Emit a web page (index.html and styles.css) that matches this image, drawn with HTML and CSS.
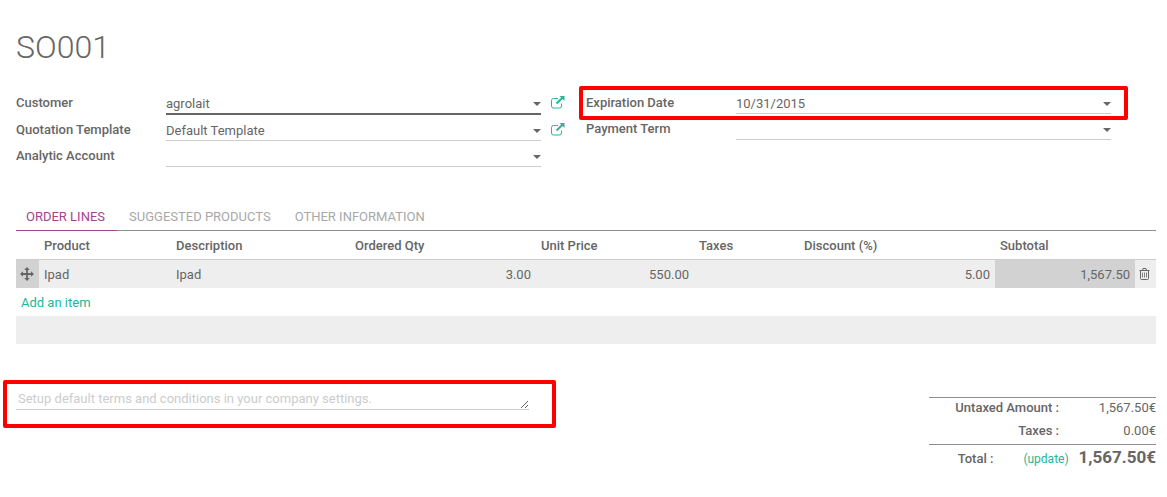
FILE: index.html
```
<!DOCTYPE html>
<html lang="en">

<head>
  <meta charset="UTF-8">
  <meta name="viewport" content="width=device-width, initial-scale=1.0">
  <title>SO001</title>
  <link rel="stylesheet" href="styles.css">
</head>

<body>
  <main class="sheet">
    <h1>SO001</h1>

    <div class="groups">
      <div class="group">
        <div class="field">
          <label for="customer">Customer</label>
          <div class="control dropdown">
            <input class="active" type="text" id="customer" value="agrolait">
          </div>
          <a class="external" href="#" aria-label="Open customer">
            <svg width="14" height="13" viewBox="0 0 14 13" fill="none" stroke="currentColor">
              <path d="M7 2.5H2.5Q.5 2.5 .5 4.5V10Q.5 12 2.5 12H8.5Q10.5 12 10.5 10V7.5" />
              <path d="M5.5 7.5L11.5 1.8" stroke-width="1.9" />
              <path d="M8.5 0H13.5V5Z" fill="currentColor" stroke="none" />
            </svg>
          </a>
        </div>
        <div class="field">
          <label for="template">Quotation Template</label>
          <div class="control dropdown">
            <select id="template">
              <option>Default Template</option>
            </select>
          </div>
          <a class="external" href="#" aria-label="Open quotation template">
            <svg width="14" height="13" viewBox="0 0 14 13" fill="none" stroke="currentColor">
              <path d="M7 2.5H2.5Q.5 2.5 .5 4.5V10Q.5 12 2.5 12H8.5Q10.5 12 10.5 10V7.5" />
              <path d="M5.5 7.5L11.5 1.8" stroke-width="1.9" />
              <path d="M8.5 0H13.5V5Z" fill="currentColor" stroke="none" />
            </svg>
          </a>
        </div>
        <div class="field">
          <label for="analytic">Analytic Account</label>
          <div class="control dropdown">
            <select id="analytic">
              <option></option>
            </select>
          </div>
        </div>
      </div>

      <div class="group">
        <div class="field highlight highlight-date">
          <label for="expiration">Expiration Date</label>
          <div class="control dropdown">
            <input type="text" id="expiration" value="10/31/2015">
          </div>
        </div>
        <div class="field">
          <label for="payment">Payment Term</label>
          <div class="control dropdown">
            <select id="payment">
              <option></option>
            </select>
          </div>
        </div>
      </div>
    </div>

    <nav class="tabs">
      <a class="tab active" href="#">ORDER LINES</a>
      <a class="tab" href="#">SUGGESTED PRODUCTS</a>
      <a class="tab" href="#">OTHER INFORMATION</a>
    </nav>

    <table class="lines">
      <colgroup>
        <col class="col-handle">
        <col class="col-product">
        <col class="col-description">
        <col class="col-qty">
        <col class="col-price">
        <col class="col-taxes">
        <col class="col-discount">
        <col class="col-subtotal">
        <col class="col-delete">
      </colgroup>
      <thead>
        <tr>
          <th></th>
          <th>Product</th>
          <th>Description</th>
          <th>Ordered Qty</th>
          <th>Unit Price</th>
          <th>Taxes</th>
          <th>Discount (%)</th>
          <th>Subtotal</th>
          <th></th>
        </tr>
      </thead>
      <tbody>
        <tr class="line">
          <td class="icon readonly">
            <svg width="14" height="14" viewBox="0 0 14 14" fill="currentColor">
              <path d="M7 0L9.8 3H7.9V6.1H11V4.2L14 7L11 9.8V7.9H7.9V11H9.8L7 14L4.2 11H6.1V7.9H3V9.8L0 7L3 4.2V6.1H6.1V3H4.2Z" />
            </svg>
          </td>
          <td>Ipad</td>
          <td>Ipad</td>
          <td class="number">3.00</td>
          <td class="number">550.00</td>
          <td></td>
          <td class="number">5.00</td>
          <td class="number readonly">1,567.50</td>
          <td class="icon">
            <button class="delete" aria-label="Delete line">
              <svg width="11" height="12" viewBox="0 0 11 12" fill="none" stroke="currentColor">
                <path d="M.5 2.5H10.5M3.5 2.5L4 .5H7L7.5 2.5M1.5 2.5V10.5Q1.5 11.5 2.5 11.5H8.5Q9.5 11.5 9.5 10.5V2.5" />
                <path d="M3.5 4.5V9.5M5.5 4.5V9.5M7.5 4.5V9.5" stroke-width=".8" />
              </svg>
            </button>
          </td>
        </tr>
        <tr>
          <td colspan="9"><a href="#">Add an item</a></td>
        </tr>
      </tbody>
      <tfoot>
        <tr>
          <td colspan="9"></td>
        </tr>
      </tfoot>
    </table>

    <div class="bottom">
      <div class="terms highlight highlight-terms">
        <textarea rows="1" aria-label="Terms and conditions" placeholder="Setup default terms and conditions in your company settings."></textarea>
      </div>

      <div class="totals">
        <div class="total-row">
          <span class="total-label">Untaxed Amount :</span>
          <span class="amount">1,567.50€</span>
        </div>
        <div class="total-row">
          <span class="total-label">Taxes :</span>
          <span class="amount">0.00€</span>
        </div>
        <div class="total-row grand">
          <span class="total-label">Total :</span>
          <button class="update">(update)</button>
          <span class="grand-amount">1,567.50€</span>
        </div>
      </div>
    </div>
  </main>
</body>

</html>
```
FILE: styles.css
```
body {
  margin: 0;
  background: #ffffff;
  color: #666666;
  font-family: Roboto, "Liberation Sans", sans-serif;
  font-size: 13px;
  line-height: 18px;
}

.sheet {
  padding: 28px 11px 24px 16px;
}

h1 {
  margin: 0 0 22px;
  font-size: 32px;
  font-weight: 300;
  line-height: 38px;
}

a {
  color: #21b799;
  text-decoration: none;
}

svg {
  display: block;
}

input,
select,
textarea,
button {
  font: inherit;
  color: inherit;
}

button {
  padding: 0;
  border: none;
  background: none;
  cursor: pointer;
}

.groups {
  display: grid;
  grid-template-columns: 1fr 1fr;
  align-items: start;
}

.group {
  padding-right: 45px;
}

.field {
  display: flex;
  position: relative;
}

.field label {
  width: 150px;
  padding-top: 6px;
  font-weight: 500;
}

.control {
  flex: 1;
  position: relative;
}

.control input,
.control select {
  display: block;
  appearance: none;
  box-sizing: content-box;
  width: 100%;
  height: 18px;
  padding: 7px 0 0;
  border: none;
  border-bottom: 1px solid #cccccc;
  border-radius: 0;
  background: none;
  outline: none;
}

.control input.active {
  border-bottom: 2px solid #666666;
}

.dropdown::after {
  content: "";
  position: absolute;
  top: 14px;
  right: 0;
  border: 4px solid transparent;
  border-top-color: #666666;
  border-bottom: none;
  pointer-events: none;
}

.external {
  position: absolute;
  top: 8px;
  right: -24px;
}

/* red callout frames */
.highlight {
  position: relative;
}

.highlight::before {
  content: "";
  position: absolute;
  border: 4px solid #ff0000;
  border-radius: 2px;
  pointer-events: none;
}

.highlight-date::before {
  inset: -2px -17px -6px -7px;
}

.highlight-terms::before {
  inset: -7px -27px -18px -13px;
}

.tabs {
  display: flex;
  margin-top: 35px;
  border-bottom: 1px solid #8f8f8f;
}

.tab {
  margin-bottom: -1px;
  padding: 6px 12px 4px;
  border-bottom: 1px solid transparent;
  color: #a8a8a8;
}

.tab.active {
  padding-left: 10px;
  border-color: #a24689;
  color: #a24689;
}

.lines {
  width: 100%;
  table-layout: fixed;
  border-collapse: separate;
  border-spacing: 0;
}

/* relative widths, stretched to the full table */
.col-handle { width: 23px; }
.col-product { width: 132px; }
.col-description { width: 179px; }
.col-qty { width: 186px; }
.col-price { width: 158px; }
.col-taxes { width: 105px; }
.col-discount { width: 196px; }
.col-subtotal { width: 140px; }
.col-delete { width: 21px; }

.lines th,
.lines td {
  height: 18px;
  padding: 6px 5px 4px;
  text-align: left;
}

.lines th {
  border-bottom: 1px solid #cccccc;
  font-weight: 500;
}

.line,
.lines tfoot {
  background: #eeeeee;
}

.lines .number {
  text-align: right;
}

.lines .icon {
  padding: 5px 4px;
}

.lines .readonly {
  background: #d2d2d2;
}

.delete {
  display: block;
}

.bottom {
  display: flex;
  justify-content: space-between;
  align-items: flex-start;
  margin-top: 43px;
}

.terms {
  width: 45%;
}

.terms textarea {
  display: block;
  box-sizing: border-box;
  width: 100%;
  height: 23px;
  padding: 3px 2px 1px;
  border: none;
  border-bottom: 1px solid #cccccc;
  outline: none;
  background: none;
  overflow: hidden;
  resize: vertical;
}

.terms textarea::placeholder {
  color: #cccccc;
}

.totals {
  width: 227px;
  margin-top: 10px;
  border-top: 1px solid #8f8f8f;
}

.total-row {
  display: flex;
  justify-content: flex-end;
  padding: 1px 0 4px;
}

.total-label {
  font-weight: 500;
}

.amount {
  width: 97px;
  text-align: right;
}

.grand {
  align-items: baseline;
  gap: 10px;
  border-top: 1px solid #8f8f8f;
}

.update {
  margin-left: 20px;
  color: #21b799;
  font-size: 12px;
}

.grand-amount {
  font-size: 17px;
  font-weight: 700;
  line-height: 22px;
}
```
